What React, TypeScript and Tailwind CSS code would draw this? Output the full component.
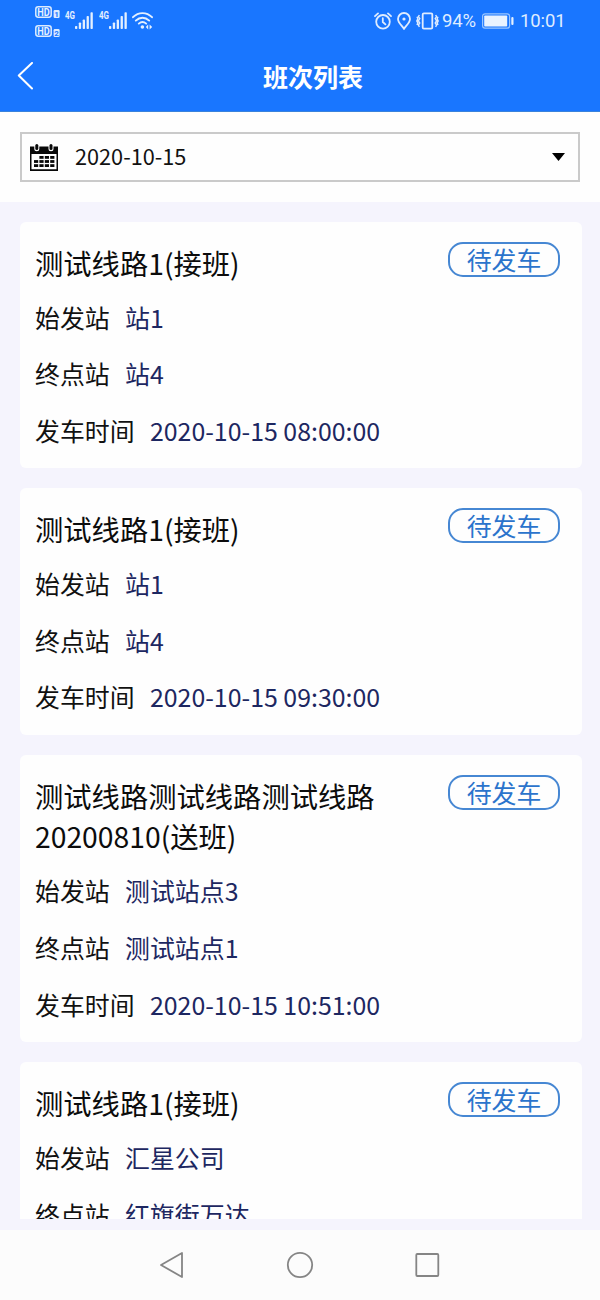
type Trip = { name: string; from: string; to: string; time: string };

const trips: Trip[] = [
  { name: '测试线路1(接班)', from: '站1', to: '站4', time: '2020-10-15 08:00:00' },
  { name: '测试线路1(接班)', from: '站1', to: '站4', time: '2020-10-15 09:30:00' },
  { name: '测试线路测试线路测试线路20200810(送班)', from: '测试站点3', to: '测试站点1', time: '2020-10-15 10:51:00' },
  { name: '测试线路1(接班)', from: '汇星公司', to: '红旗街万达', time: '' },
];

function HdBadge({ n }: { n: string }) {
  return (
    <svg className="block h-[12px] w-[26px]" viewBox="0 0 26 12" fill="none">
      <rect x="0.8" y="0.8" width="15.4" height="10.4" rx="2.4" stroke="#dcebff" strokeWidth="1.5" />
      <text x="8.5" y="9.6" textAnchor="middle" textLength="12.4" lengthAdjust="spacingAndGlyphs" fontFamily="Roboto, sans-serif" fontWeight="700" fontSize="10.5" fill="#e4f0ff">HD</text>
      <rect x="18.6" y="4" width="6" height="8" rx="1.2" fill="#dcebff" />
      <text x="21.6" y="10.8" textAnchor="middle" fontFamily="Roboto, sans-serif" fontWeight="700" fontSize="8" fill="#1976ff">{n}</text>
    </svg>
  );
}

function Signal() {
  return (
    <svg className="block h-[20px] w-[28px]" viewBox="0 0 28 20" fill="#e4f0ff">
      <text x="0" y="9.3" textLength="10" lengthAdjust="spacingAndGlyphs" fontFamily="Roboto, sans-serif" fontWeight="700" fontSize="10">4G</text>
      <rect x="10" y="16" width="2.3" height="3" rx="0.8" />
      <rect x="13.8" y="12.5" width="2.3" height="6.5" rx="0.8" />
      <rect x="17.7" y="9.5" width="2.3" height="9.5" rx="0.8" />
      <rect x="21.6" y="6" width="2.3" height="13" rx="0.8" />
      <rect x="25.5" y="2.3" width="2.3" height="16.7" rx="0.8" />
    </svg>
  );
}

function StatusBar() {
  return (
    <div className="flex h-[42px] items-start pl-[34.5px]">
      <div className="mt-[6px] flex flex-col gap-[6.5px]">
        <HdBadge n="1" />
        <HdBadge n="2" />
      </div>
      <div className="mt-[10px] ml-[4.5px] flex">
        <Signal />
        <div className="w-[6px]" />
        <Signal />
      </div>
      <svg className="mt-[11px] ml-[4.5px] h-[19px] w-[21px]" viewBox="0 0 21 19" fill="none" stroke="#e4f0ff" strokeWidth="1.9" strokeLinecap="round">
        <path d="M1 6.2C6.4.7 14.6.7 20 6.2" />
        <path d="M3.8 9.6c4-3.9 9.4-3.9 13.4 0" />
        <path d="M6.8 12.6c2.4-2.2 5-2.2 7.4 0" />
        <circle cx="10.4" cy="16" r="1.8" fill="#e4f0ff" stroke="none" />
        <path d="M16.2 13.4v5l-2.4-2.5zM17.6 13.4v5l2.6-2.5z" fill="#e4f0ff" stroke="none" />
      </svg>
      <div className="ml-auto flex h-[42px] items-center pr-[34.5px] text-[#dfecff]">
        <svg className="h-[18px] w-[18px]" viewBox="0 0 18 18" fill="none" stroke="currentColor" strokeWidth="1.8" strokeLinecap="round">
          <circle cx="9" cy="9.8" r="6.8" />
          <path d="M8.8 6.2v3.8l2.6 2.4M1 4.2 4 1.4M17 4.2l-3-2.8" />
        </svg>
        <svg className="ml-[5px] h-[18px] w-[14px]" viewBox="0 0 14 18" fill="none" stroke="currentColor" strokeWidth="1.8">
          <path d="M7 16.8C5.4 14 1 11 1 7a6 6 0 0 1 12 0c0 4-4.4 7-6 9.8Z" />
          <circle cx="7" cy="7" r="1.6" fill="currentColor" stroke="none" />
        </svg>
        <svg className="ml-[5px] h-[18px] w-[23px]" viewBox="0 0 23 18" fill="none" stroke="currentColor" strokeWidth="1.8">
          <rect x="6.7" y="1.3" width="9.6" height="15.4" rx="1.2" />
          <path d="m3.4 3-1 1.6 1.4 2-1.4 2.2 1.4 2.2-1.4 2 1 1.8M1 4.8l.8 2-1 2.1 1 2L1 13M19.6 3l1 1.6-1.4 2 1.4 2.2-1.4 2.2 1.4 2-1 1.8M22 4.8l-.8 2 1 2.1-1 2L22 13" strokeWidth="1.4" />
        </svg>
        <span className="ml-[3px] w-[35px] font-['Roboto',sans-serif] text-[18.5px] leading-none tracking-[-0.1px] whitespace-nowrap">94%</span>
        <svg className="ml-[5px] h-[16px] w-[32px]" viewBox="0 0 32 16" fill="none">
          <rect x="0.6" y="0.8" width="27" height="14.4" rx="2.4" stroke="#9ac6ff" strokeWidth="1.2" />
          <rect x="2.2" y="2.4" width="23" height="11.2" rx="0.8" fill="#e9f3ff" />
          <rect x="29.3" y="4" width="2.2" height="8" rx="1" fill="#e4f0ff" />
        </svg>
        <span className="ml-[6px] font-['Roboto',sans-serif] text-[18.5px] leading-none tracking-[-0.1px]">10:01</span>
      </div>
    </div>
  );
}

function CalendarIcon() {
  return (
    <svg className="mt-[2px] h-[28px] w-[28px]" viewBox="0 0 28 28" fill="#080808">
      <path fillRule="evenodd" d="M0 2.5h28V27H0zM1.5 10v15.3h25V10z" />
      {[6.5, 20.7].map((x) => (
        <g key={x}>
          <rect x={x - 2.2} y="0" width="5" height="7.2" rx="2.5" fill="#fff" />
          <rect x={x - 1.2} y="0" width="3" height="6" rx="1.5" />
        </g>
      ))}
      {[0, 1, 2].map((r) =>
        [0, 1, 2, 3].map((c) =>
          r === 0 && c === 0 ? null : <rect key={`${r}-${c}`} x={4 + c * 5.4} y={12 + r * 4.1} width="4.2" height="2.8" />,
        ),
      )}
    </svg>
  );
}

function Row({ label, value }: { label: string; value: string }) {
  return (
    <div className="flex h-[56.6px] items-center gap-[15.4px] text-[24.9px] whitespace-nowrap">
      <span className="text-[#111]">{label}</span>
      <span className="text-[#1d2761]">{value}</span>
    </div>
  );
}

function TripCard({ trip }: { trip: Trip }) {
  return (
    <article className="shrink-0 rounded-[6px] bg-[#fefefe] px-[15px] pt-[20px] pb-[9.6px]">
      <div className="flex items-start justify-between pr-[7px]">
        <h2 className="mt-[1px] w-[352px] text-[28.3px] leading-[40.4px] break-all text-[#0c0c0c]">{trip.name}</h2>
        <span className="flex h-[35px] w-[112px] items-center justify-center rounded-[15px] border-2 border-[#4687d3] text-[24.9px] leading-none text-[#2b74cc]">待发车</span>
      </div>
      <div className="mt-[6px]">
        <Row label="始发站" value={trip.from} />
        <Row label="终点站" value={trip.to} />
        {trip.time && <Row label="发车时间" value={trip.time} />}
      </div>
    </article>
  );
}

export default function App() {
  return (
    <div className="flex h-[1300px] w-[600px] flex-col overflow-hidden bg-[#f5f4fd] font-['Noto_Sans_CJK_SC',sans-serif]">
      <header className="h-[112px] shrink-0 border-b border-[#3a83dc] bg-[#1976ff]">
        <StatusBar />
        <div className="grid h-[69px] grid-cols-[60px_1fr_60px] items-center">
          <svg className="ml-[17px] h-[30px] w-[18px]" viewBox="0 0 18 30" fill="none" stroke="#fff" strokeWidth="2" strokeLinecap="round" strokeLinejoin="round">
            <path d="M15 1 1.8 13.5 15 26.5" />
          </svg>
          <h1 className="pl-[26px] text-center text-[25px] font-bold text-white">班次列表</h1>
        </div>
      </header>
      <div className="h-[90px] shrink-0 bg-[#fefefe] px-[20px] pt-[20px]">
        <div className="flex h-[50px] items-center border-2 border-[#cacaca] pr-[13px] pl-[8px]">
          <CalendarIcon />
          <span className="mb-[1px] ml-[17px] text-[21.7px] text-[#111]">2020-10-15</span>
          <svg className="ml-auto h-[8px] w-[13px]" viewBox="0 0 13 8">
            <path d="M0 0h13L6.5 8z" fill="#000" />
          </svg>
        </div>
      </div>
      <main className="mt-[19.5px] ml-[20px] flex h-[997px] w-[562px] shrink-0 flex-col gap-[20px] overflow-hidden">
        {trips.map((trip, i) => (
          <TripCard key={i} trip={trip} />
        ))}
      </main>
      <nav className="mt-auto flex h-[70px] shrink-0 items-center justify-center gap-[101px] bg-[#fcfcfc]">
        <svg className="h-[28px] w-[26px]" viewBox="0 0 26 28" fill="none" stroke="#858585" strokeWidth="1.8" strokeLinejoin="round">
          <path d="M23 2v24L2 14z" />
        </svg>
        <svg className="h-[28px] w-[28px]" viewBox="0 0 28 28" fill="none" stroke="#858585" strokeWidth="1.8">
          <circle cx="14" cy="14" r="12.2" />
        </svg>
        <svg className="h-[26px] w-[26px]" viewBox="0 0 26 26" fill="none" stroke="#858585" strokeWidth="1.8">
          <rect x="1.3" y="2" width="22" height="22" rx="1" />
        </svg>
      </nav>
    </div>
  );
}
